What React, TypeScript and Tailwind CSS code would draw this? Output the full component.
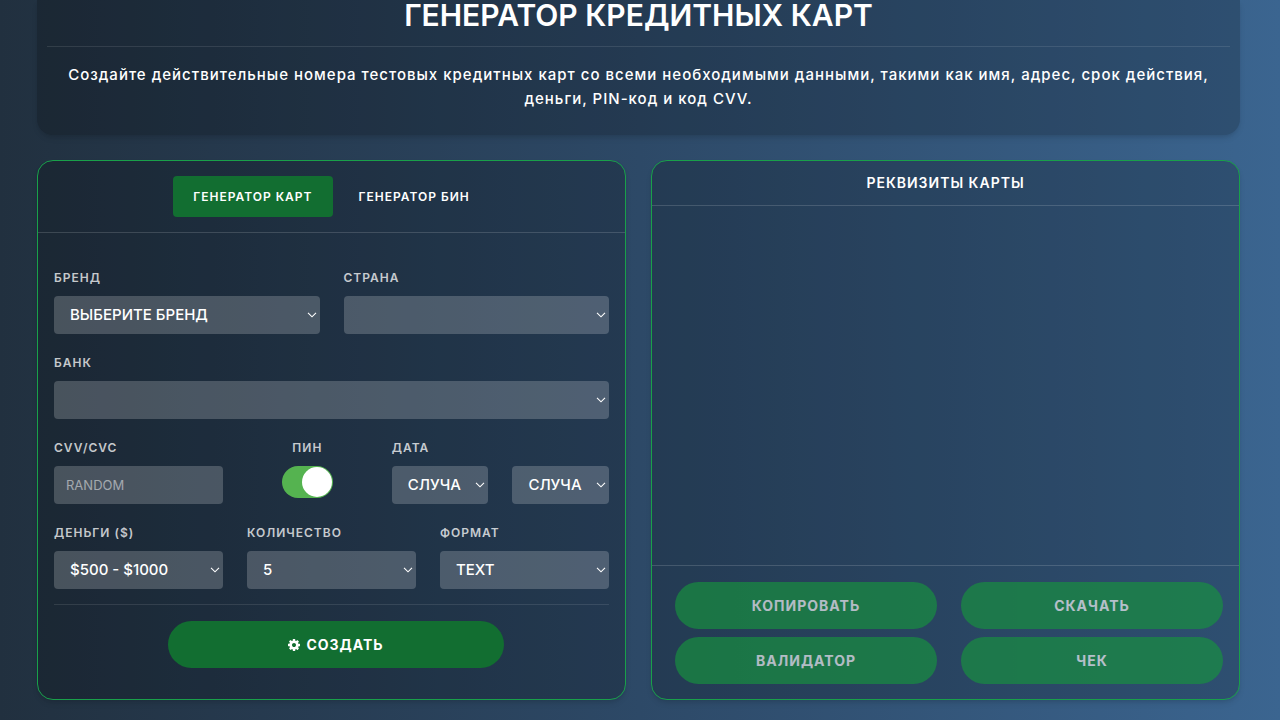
import React, { useState } from "react";

type SelectProps = {
  id: string;
  labelledBy?: string;
  options: string[];
};

type SelectFieldProps = {
  id: string;
  label: string;
  options: string[];
  className?: string;
};

const labelStyle =
  "block text-xs leading-4 font-semibold tracking-[1px] text-white/75";
const fieldStyle =
  "block w-full h-[38px] rounded-sm bg-white/20 text-white focus:outline-none";

const Select: React.FC<SelectProps> = ({ id, labelledBy, options }) => {
  return (
    <div className="relative">
      <select
        id={id}
        aria-labelledby={labelledBy}
        className={`${fieldStyle} appearance-none px-4 text-[15px] font-medium`}
      >
        {options.map((option) => (
          <option key={option} className="text-black">
            {option}
          </option>
        ))}
      </select>
      <svg
        viewBox="0 0 10 6"
        fill="none"
        stroke="currentColor"
        strokeWidth="1.1"
        className="pointer-events-none absolute top-4 right-[3px] h-[6px] w-[10px]"
      >
        <path d="M1 .8 5 4.800 9 .8" />
      </svg>
    </div>
  );
};

const SelectField: React.FC<SelectFieldProps> = ({
  id,
  label,
  options,
  className,
}) => {
  return (
    <div className={`flex flex-col gap-[10px] ${className}`}>
      <label htmlFor={id} className={labelStyle}>
        {label}
      </label>
      <Select id={id} options={options} />
    </div>
  );
};

const CogIcon = () => (
  <svg viewBox="0 0 1792 1792" fill="currentColor" className="size-[14px]">
    <path d="M1152 896q0-106-75-181t-181-75-181 75-75 181 75 181 181 75 181-75 75-181zm512-109v222q0 12-8 23t-20 13l-185 28q-19 54-39 91 35 50 107 138 10 12 10 25t-9 23q-27 37-99 108t-94 71q-12 0-26-9l-138-108q-44 23-91 38-16 136-29 186-7 28-36 28h-222q-14 0-24.5-8.5t-11.5-21.5l-28-184q-49-16-90-37l-141 107q-10 9-25 9-14 0-25-11-126-114-165-168-7-10-7-23 0-12 8-23 15-21 51-66.5t54-70.5q-27-50-41-99l-183-27q-13-2-21-12.5t-8-23.5v-222q0-12 8-23t19-13l186-28q14-46 39-92-40-57-107-138-10-12-10-24 0-10 9-23 26-36 98.5-107.5t94.500-71.5q13 0 26 10l138 107q44-23 91-38 16-136 29-186 7-28 36-28h222q14 0 24.5 8.5t11.5 21.5l28 184q49 16 90 37l142-107q9-9 24-9 13 0 25 10 129 119 165 170 7 8 7 22 0 12-8 23-15 21-51 66.5t-54 70.5q26 50 41 98l183 28q13 2 21 12.5t8 23.5z" />
  </svg>
);

const CardForm = () => {
  const [cvv, setCvv] = useState<string>("");
  const [pin, setPin] = useState<boolean>(true);

  return (
    <form
      className="flex flex-col px-4 pt-[37px]"
      onSubmit={(e) => e.preventDefault()}
    >
      <div className="grid grid-cols-12 gap-x-6 gap-y-[21px]">
        <SelectField
          id="brand"
          label="БРЕНД"
          options={["ВЫБЕРИТЕ БРЕНД"]}
          className="col-span-6"
        />
        <SelectField
          id="country"
          label="СТРАНА"
          options={[]}
          className="col-span-6"
        />
        <SelectField
          id="bank"
          label="БАНК"
          options={[]}
          className="col-span-12"
        />
        <div className="col-span-4 flex flex-col gap-[10px]">
          <label htmlFor="cvv" className={labelStyle}>
            CVV/CVC
          </label>
          <input
            id="cvv"
            type="text"
            placeholder="RANDOM"
            value={cvv}
            onChange={(e) => setCvv(e.target.value)}
            className={`${fieldStyle} px-3 text-[13px] placeholder:text-white/50`}
          />
        </div>
        <div className="col-span-3 flex flex-col items-center gap-[10px]">
          <label htmlFor="pin" className={labelStyle}>
            ПИН
          </label>
          <input
            id="pin"
            type="checkbox"
            checked={pin}
            onChange={(e) => setPin(e.target.checked)}
            className="flex h-8 w-[51px] cursor-pointer appearance-none items-center rounded-full bg-gray-500 p-px before:size-[30px] before:rounded-full before:bg-white checked:justify-end checked:bg-[#55b350]"
          />
        </div>
        <div className="col-span-5 flex flex-col gap-[10px]">
          <label id="date-label" htmlFor="month" className={labelStyle}>
            ДАТА
          </label>
          <div className="grid grid-cols-2 gap-6">
            <Select id="month" options={["СЛУЧА"]} />
            <Select id="year" labelledBy="date-label" options={["СЛУЧА"]} />
          </div>
        </div>
        <SelectField
          id="money"
          label="ДЕНЬГИ ($)"
          options={["$500 - $1000"]}
          className="col-span-4"
        />
        <SelectField
          id="quantity"
          label="КОЛИЧЕСТВО"
          options={["5"]}
          className="col-span-4"
        />
        <SelectField
          id="format"
          label="ФОРМАТ"
          options={["TEXT"]}
          className="col-span-4"
        />
      </div>
      <div className="mt-[15px] flex justify-center border-t border-white/10 pt-4 pl-2">
        <button
          type="submit"
          className="flex h-[47px] w-[336px] items-center justify-center gap-[5px] rounded-full bg-[#126e31] text-sm font-bold tracking-[1px] text-white"
        >
          <CogIcon />
          СОЗДАТЬ
        </button>
      </div>
    </form>
  );
};

const actions = ["КОПИРОВАТЬ", "СКАЧАТЬ", "ВАЛИДАТОР", "ЧЕК"];

const App = () => {
  const [tab, setTab] = useState<string>("card");

  const tabStyle = (name: string) =>
    `h-[41px] rounded-sm px-5 text-xs font-semibold tracking-[1px] ${
      tab === name ? "bg-[#126e31]" : ""
    }`;

  return (
    <main className="flex min-h-screen flex-col gap-[25px] bg-gradient-to-r from-[#21303f] via-[#2d4967] to-[#3b6590] pr-10 pb-5 pl-[37px] font-[Inter,sans-serif] text-white">
      <header className="rounded-b-2xl bg-black/20 px-[10px] pb-6 text-center shadow-md">
        <h1 className="border-b border-white/10 pb-4 text-[30px] leading-[30px] font-semibold">
          ГЕНЕРАТОР КРЕДИТНЫХ КАРТ
        </h1>
        <p className="px-3 pt-4 text-[15px] leading-6 font-medium tracking-[1px]">
          Создайте действительные номера тестовых кредитных карт со всеми
          необходимыми данными, такими как имя, адрес, срок действия, деньги,
          PIN-код и код CVV.
        </p>
      </header>

      <div className="grid grow grid-cols-2 gap-[25px]">
        <section className="flex flex-col rounded-2xl border border-[#19a04a] bg-black/20 shadow-md">
          <div className="flex justify-center gap-[6px] border-b border-white/15 py-[15px]">
            <button
              type="button"
              className={tabStyle("card")}
              onClick={() => setTab("card")}
            >
              ГЕНЕРАТОР КАРТ
            </button>
            <button
              type="button"
              className={tabStyle("bin")}
              onClick={() => setTab("bin")}
            >
              ГЕНЕРАТОР БИН
            </button>
          </div>
          <CardForm />
        </section>

        <section className="flex flex-col rounded-2xl border border-[#19a04a] bg-black/20 shadow-md">
          <h2 className="border-b border-white/15 py-3 text-center text-sm leading-5 font-semibold tracking-[1px]">
            РЕКВИЗИТЫ КАРТЫ
          </h2>
          <div className="grow" />
          <div className="grid grid-cols-2 gap-x-6 gap-y-2 border-t border-white/15 pt-4 pr-4 pb-[15px] pl-[23px]">
            {actions.map((action) => (
              <button
                key={action}
                type="button"
                disabled
                className="h-[47px] rounded-full bg-[#17943e] text-sm font-bold tracking-[1px] text-white opacity-65"
              >
                {action}
              </button>
            ))}
          </div>
        </section>
      </div>
    </main>
  );
};

export default App;
